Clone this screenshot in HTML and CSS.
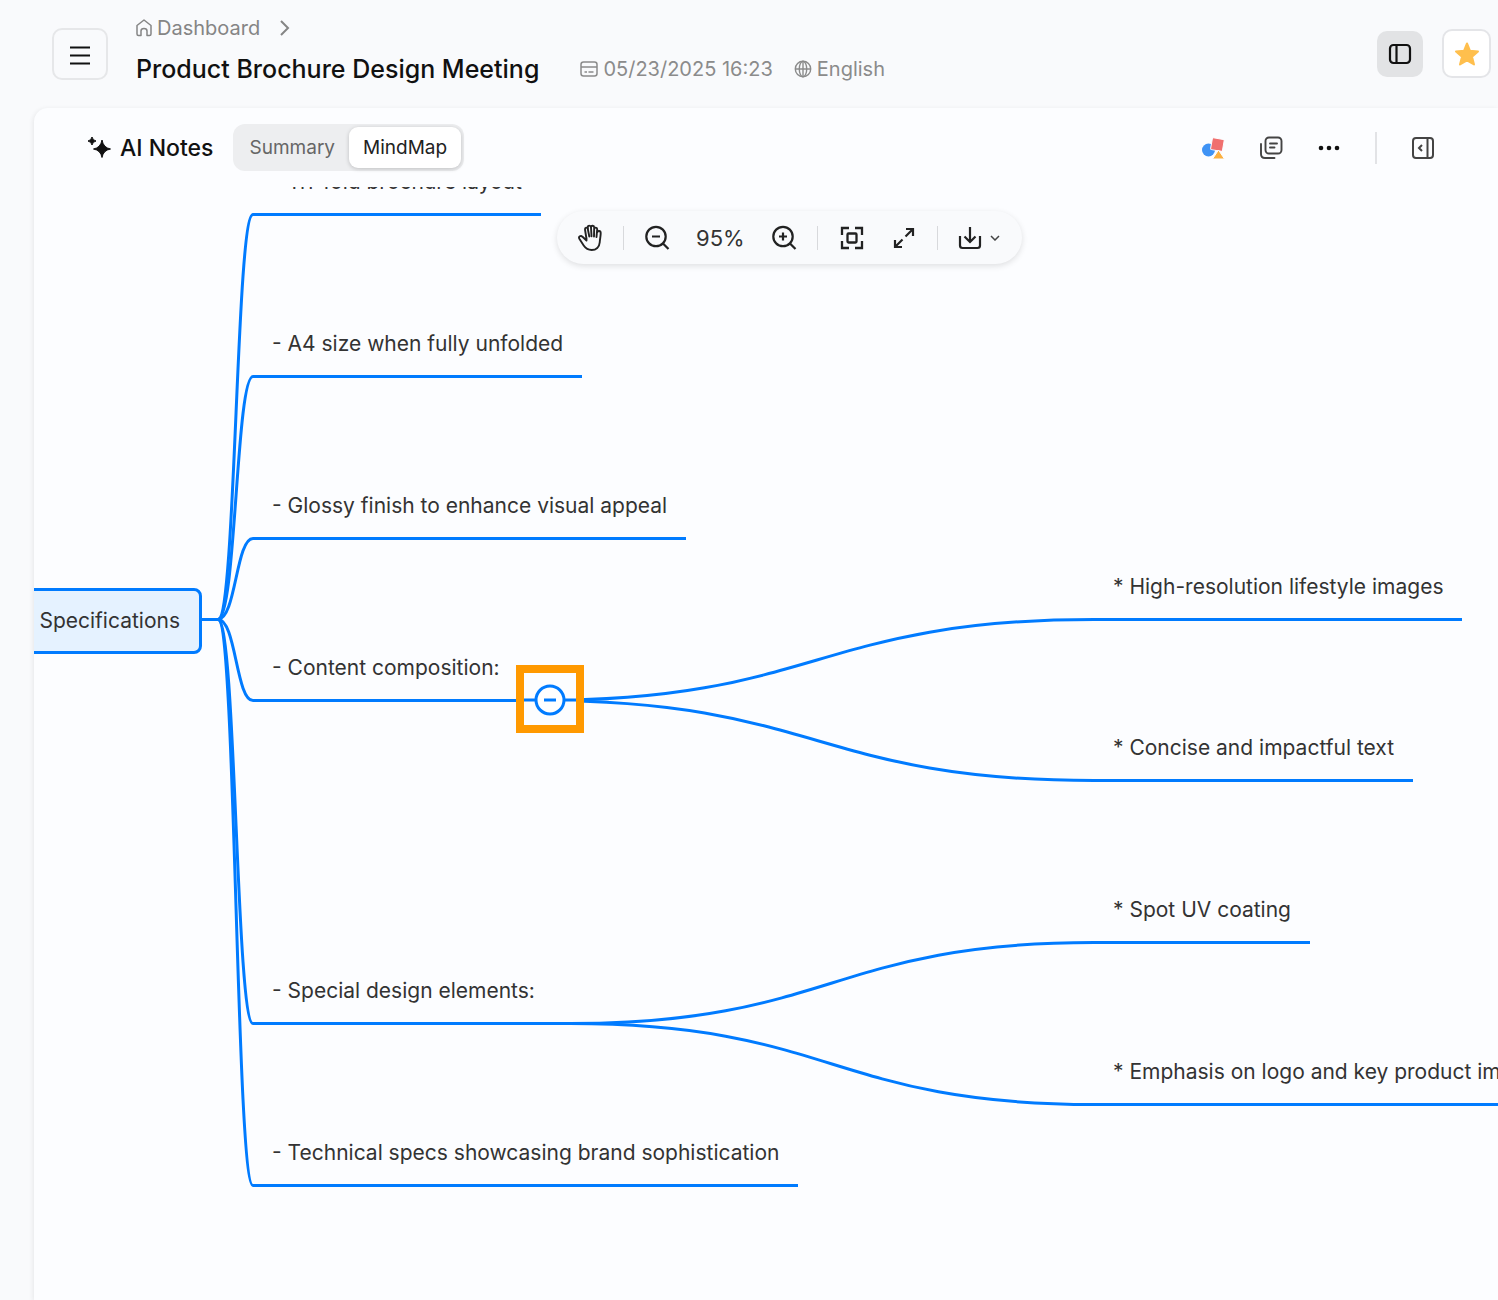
FILE: index.html
```
<!DOCTYPE html>
<html lang="en">
<head>
    <meta charset="utf-8">
    <title>Product Brochure Design Meeting</title>
    <meta name="viewport" content="width=device-width, initial-scale=1.0">
    <link rel="stylesheet" href="styles.css">
</head>
<body>
    <header class="topbar">
        <button class="menu-btn" aria-label="Menu">
            <svg width="22" height="22" viewBox="0 0 22 22" stroke="#111" stroke-width="2"><path d="M1 4.500h20M1 12.500h20M1 20.500h20"/></svg>
        </button>
        <div class="heading">
            <nav class="crumbs">
                <a href="#">
                    <svg width="16" height="18" viewBox="0 0 16 18" fill="none" stroke="#858585" stroke-width="1.500" stroke-linejoin="round"><path d="M1 6.500 8 1l7 5.500V15q0 1.500-1.500 1.500H11V12q0-2.500-3-2.500T5 12v4.500H2.500Q1 16.500 1 15z"/></svg>
                    Dashboard
                </a>
                <svg width="10" height="16" viewBox="0 0 10 16" fill="none" stroke="#858585" stroke-width="2"><path d="m1 1 7 7-7 7"/></svg>
            </nav>
            <div class="title-row">
                <h1>Product Brochure Design Meeting</h1>
                <span class="meta">
                    <svg width="18" height="18" viewBox="0 0 18 18" fill="none" stroke="#8b8b8b" stroke-width="1.500"><rect x="1" y="2" width="16" height="14" rx="2.500"/><path d="M1 7h16M4.500 12H7M8.500 12h5"/></svg>
                    05/23/2025 16:23
                </span>
                <span class="meta">
                    <svg width="18" height="18" viewBox="0 0 18 18" fill="none" stroke="#8b8b8b" stroke-width="1.400"><circle cx="9" cy="9" r="7.700"/><ellipse cx="9" cy="9" rx="3.700" ry="7.700"/><path d="M1.300 9h15.400M9 1.300v15.400"/></svg>
                    English
                </span>
            </div>
        </div>
        <div class="top-actions">
            <button class="layout-btn" aria-label="Toggle layout">
                <svg width="24" height="22" viewBox="0 0 24 22" fill="none" stroke="#111" stroke-width="2.200"><rect x="2" y="2" width="20" height="18" rx="3.500"/><path d="M8.500 2v18"/></svg>
            </button>
            <button class="star-btn" aria-label="Favorite">
                <svg width="26" height="26" viewBox="0 0 26 26" fill="#ffbf4d" stroke="#ffbf4d" stroke-width="2" stroke-linejoin="round"><path d="m13 2.500 3 7.300 8 .7-6 5.200 2 7.800-7-4.200-7 4.200 2-7.800-6-5.200 8-.7z"/></svg>
            </button>
        </div>
    </header>

    <main class="panel">
        <div class="panel-bar">
            <h2>
                <svg width="24" height="24" viewBox="0 0 24 24" fill="#111"><path stroke="#111" stroke-linejoin="round" d="M15 4q1.300 7.700 8.500 9-7.200 1.300-8.500 8.500-1.300-7.200-8.500-8.500 7.200-1.300 8.500-9zM5 1Q5.700 4.300 9 5 5.700 5.700 5 9 4.300 5.700 1 5 4.300 4.300 5 1z"/></svg>
                AI Notes
            </h2>
            <div class="tabs">
                <button>Summary</button>
                <button class="active">MindMap</button>
            </div>
            <div class="panel-actions">
                <button aria-label="Shapes">
                    <svg width="24" height="24" viewBox="0 0 24 24"><circle cx="7.500" cy="14" r="6.500" fill="#3f93f5"/><rect x="10.500" y="2.500" width="12" height="12" rx="1" fill="#f0706f" stroke="#fcfdff" transform="rotate(10 16 8)"/><path d="m17.500 14 6 9h-12z" fill="#fbb03f" stroke="#fcfdff" stroke-linejoin="round"/></svg>
                </button>
                <button aria-label="Copy notes">
                    <svg width="24" height="24" viewBox="0 0 24 24" fill="none" stroke="#444" stroke-width="1.900" stroke-linecap="round"><rect x="6.500" y="1.500" width="16" height="16" rx="3.500"/><path d="M2 8v10q0 4 4 4h9.500M11 7.500h7M11 11.500h4.500"/></svg>
                </button>
                <button aria-label="More">
                    <svg width="24" height="24" viewBox="0 0 24 24" fill="#111"><circle cx="4" cy="12" r="2.300"/><circle cx="12" cy="12" r="2.300"/><circle cx="20" cy="12" r="2.300"/></svg>
                </button>
                <span class="split"></span>
                <button aria-label="Collapse panel">
                    <svg width="24" height="24" viewBox="0 0 24 24" fill="none" stroke="#444" stroke-width="2"><rect x="2" y="2" width="20" height="20" rx="3"/><path d="M16.500 2v20M11 9l-3 3 3 3"/></svg>
                </button>
            </div>
        </div>

        <div class="map">
            <!-- connectors -->
            <svg class="edges" fill="none" stroke="#007bff" stroke-width="3">
                <path d="M166 432.500h19"/>
                <path d="M184 432.500C202 432 202 27.500 219 27.500"/>
                <path d="M184 432.500C202 432 202 189.500 219 189.500"/>
                <path d="M184 432.500C202 432 202 351.500 219 351.500"/>
                <path d="M184 432.500C202 432 202 513.500 219 513.500"/>
                <path d="M184 432.500C202 432 202 836.500 219 836.500"/>
                <path d="M184 432.500C202 432 202 998.500 219 998.500"/>
                <path d="M480 513.500h26C783 513.500 783 432.500 1060 432.500"/>
                <path d="M506 513.500C783 513.500 783 593.500 1060 593.500"/>
                <path d="M500 836.500h36C798 836.500 798 755.500 1060 755.500"/>
                <path d="M536 836.500C798 836.500 798 917.500 1060 917.500"/>
            </svg>

            <div class="node root">Specifications</div>
            <div class="node n-trifold">- Tri-fold brochure layout</div>
            <div class="node n-size">- A4 size when fully unfolded</div>
            <div class="node n-finish">- Glossy finish to enhance visual appeal</div>
            <div class="node n-content">- Content composition:</div>
            <div class="node n-special">- Special design elements:</div>
            <div class="node n-specs">- Technical specs showcasing brand sophistication</div>
            <div class="node n-images">* High-resolution lifestyle images</div>
            <div class="node n-text">* Concise and impactful text</div>
            <div class="node n-uv">* Spot UV coating</div>
            <div class="node n-logo">* Emphasis on logo and key product images</div>

            <div class="marker">
                <button aria-label="Collapse branch">
                    <svg width="52" height="32" viewBox="0 0 52 32" fill="none" stroke="#007bff" stroke-width="3"><path d="M0 16h52"/><circle cx="26" cy="16" r="14" fill="#fff"/><path d="M20 16h12"/></svg>
                </button>
            </div>

            <div class="toolbar">
                <button aria-label="Pan">
                    <svg width="26" height="28" viewBox="0 0 26 28" fill="none" stroke="#222" stroke-width="1.900" stroke-linecap="round" stroke-linejoin="round"><path d="M9.500 15 8 5.500C7.700 3.300 10.300 3 10.800 5l1.500 7.500M11 5.500 10.800 3.300C10.700 1 13.800 1 14 3.300l.5 9M14 3.300c.2-2.200 3.200-2 3.200.3L17 12.500M17.200 5c.3-2 3-1.800 3 .3L19.500 13M20.200 8.500c.3-2 3.500-2 3.500.5 0 3.500-.7 5.500-1 9.500-.4 4.500-3.500 7.500-8 7.500-3.700 0-6-1.500-8-4.500L2.500 15c-1.500-2.500 1.300-4 3-2.200l4 3.700V14"/></svg>
                </button>
                <span class="sep"></span>
                <button aria-label="Zoom out">
                    <svg width="26" height="26" viewBox="0 0 26 26" fill="none" stroke="#222" stroke-width="2.200"><circle cx="12" cy="11.500" r="9.700"/><path d="m19 18.500 5.500 5.500M8 11.500h8"/></svg>
                </button>
                <span class="zoom">95%</span>
                <button aria-label="Zoom in">
                    <svg width="26" height="26" viewBox="0 0 26 26" fill="none" stroke="#222" stroke-width="2.200"><circle cx="12" cy="11.500" r="9.700"/><path d="m19 18.500 5.500 5.500M8 11.500h8M12 7.500v8"/></svg>
                </button>
                <span class="sep"></span>
                <button class="fit" aria-label="Fit to view">
                    <svg width="24" height="24" viewBox="0 0 24 24" fill="none" stroke="#222" stroke-width="2.300"><path d="M9 2H2v7M15 2h7v7M22 15v7h-7M9 22H2v-7"/><rect x="7.500" y="7.500" width="9" height="9" rx="1"/></svg>
                </button>
                <button class="full" aria-label="Fullscreen">
                    <svg width="22" height="22" viewBox="0 0 22 22" fill="none" stroke="#222" stroke-width="2.200"><path d="M13 2h7v7M20 2l-7.500 7.500M9 20H2v-7M2 20l7.500-7.500"/></svg>
                </button>
                <span class="sep"></span>
                <button class="download" aria-label="Download">
                    <svg width="24" height="24" viewBox="0 0 24 24" fill="none" stroke="#222" stroke-width="2.200"><path d="M2 10v9.500Q2 22 4.500 22h15q2.500 0 2.500-2.500V10M12 1v15M6.500 10.500 12 16l5.500-5.500"/></svg>
                    <svg width="10" height="6" viewBox="0 0 10 6" fill="none" stroke="#444" stroke-width="1.500"><path d="m1 1 4 4 4-4"/></svg>
                </button>
            </div>
        </div>
    </main>
</body>
</html>
```

FILE: styles.css
```
*{
    box-sizing: border-box;
}

body{
    margin: 0;
    height: 100vh;
    display: flex;
    flex-direction: column;
    overflow: hidden;
    background-color: #f9fafc;
    color: #111;
    font-family: Inter, "Liberation Sans", sans-serif;
}

h1, h2{
    margin: 0;
    font-weight: 500;
}

button{
    display: flex;
    align-items: center;
    justify-content: center;
    padding: 0;
    border: 0;
    background: none;
    font-family: inherit;
    color: inherit;
    cursor: pointer;
}

svg{
    flex: none;
    display: block;
}

/* header */
.topbar{
    display: flex;
    align-items: flex-start;
    height: 108px;
    flex: none;
    padding: 0 7px 0 52px;
}

.menu-btn{
    width: 56px;
    height: 52px;
    margin-top: 28px;
    border: 2px solid #e6e7e9;
    border-radius: 10px;
}

.heading{
    margin: 14px 0 0 28px;
    flex: 1;
}

.crumbs{
    display: flex;
    align-items: center;
    gap: 20px;
    height: 28px;
    font-size: 20px;
}

.crumbs a{
    display: flex;
    align-items: center;
    gap: 5px;
    color: #858585;
    text-decoration: none;
}

.title-row{
    display: flex;
    align-items: center;
    height: 32px;
    margin-top: 11px;
}

.title-row h1{
    font-size: 25px;
    margin-right: 20px;
    white-space: nowrap;
}

.meta{
    display: flex;
    align-items: center;
    gap: 5px;
    margin-left: 21px;
    font-size: 20px;
    color: #8b8b8b;
    white-space: nowrap;
}

.top-actions{
    display: flex;
    align-items: center;
    gap: 19px;
    margin-top: 29px;
}

.layout-btn{
    width: 46px;
    height: 46px;
    border-radius: 10px;
    background-color: #e2e3e5;
}

.star-btn{
    width: 49px;
    height: 49px;
    border: 2px solid #e4e5e8;
    border-radius: 10px;
    background-color: #fff;
}

/* notes panel */
.panel{
    flex: 1;
    display: flex;
    flex-direction: column;
    min-height: 0;
    margin-left: 34px;
    border-top-left-radius: 14px;
    background-color: #fcfdff;
    box-shadow: -1px 1px 5px rgba(0,0,0,0.08);
}

.panel-bar{
    display: flex;
    align-items: center;
    height: 79px;
    flex: none;
    padding: 0 63px 0 53px;
}

.panel-bar h2{
    display: flex;
    align-items: center;
    gap: 9px;
    margin-right: 19px;
    font-size: 23px;
}

.tabs{
    display: flex;
    padding: 3px;
    border-radius: 12px;
    background-color: #edeef0;
}

.tabs button{
    height: 41px;
    padding: 0 14px;
    border-radius: 9px;
    font-size: 19px;
    color: #666;
}

.tabs .active{
    background-color: #fff;
    color: #222;
    box-shadow: 0 1px 4px rgba(0,0,0,0.2);
}

.panel-actions{
    display: flex;
    align-items: center;
    gap: 34px;
    margin-left: auto;
}

.split{
    width: 2px;
    height: 32px;
    background-color: #e2e3e6;
}

/* mind map canvas */
.map{
    position: relative;
    flex: 1;
    overflow: hidden;
}

.edges{
    position: absolute;
    top: 0;
    left: 0;
    width: 100%;
    height: 100%;
}

.node{
    position: absolute;
    padding: 0 19px 18px;
    border-bottom: 3px solid #007bff;
    font-size: 21px;
    line-height: 26px;
    white-space: nowrap;
    color: #333;
}

.root{
    top: 401px;
    right: calc(100% - 168px);
    padding: 17px 19px;
    border: 3px solid #007bff;
    border-radius: 8px;
    background-color: #e5f2ff;
}

.n-trifold{ left: 219px; top: -18px; }
.n-size{ left: 219px; top: 144px; }
.n-finish{ left: 219px; top: 306px; }
.n-content{ left: 219px; top: 468px; }
.n-special{ left: 219px; top: 791px; }
.n-specs{ left: 219px; top: 953px; }
.n-images{ left: 1060px; top: 387px; }
.n-text{ left: 1060px; top: 548px; }
.n-uv{ left: 1060px; top: 710px; }
.n-logo{ left: 1060px; top: 872px; }

.marker{
    position: absolute;
    left: 482px;
    top: 478px;
    padding: 11px 0 9px;
    border: 8px solid #ff9900;
    background-color: #fcfdff;
}

.toolbar{
    position: absolute;
    left: 523px;
    top: 24px;
    display: flex;
    align-items: center;
    height: 53px;
    padding: 0 22px 0 20px;
    border-radius: 27px;
    background-color: #f9fafc;
    box-shadow: 0 2px 6px rgba(0,0,0,0.12);
}

.sep{
    width: 1px;
    height: 24px;
    margin: 0 20px;
    background-color: #d8d9dc;
}

.zoom{
    margin: 0 26px;
    font-size: 22px;
    color: #333;
}

.fit{
    margin-left: 2px;
}

.full{
    margin: 0 2px 0 29px;
}

.download{
    gap: 8px;
}
```
